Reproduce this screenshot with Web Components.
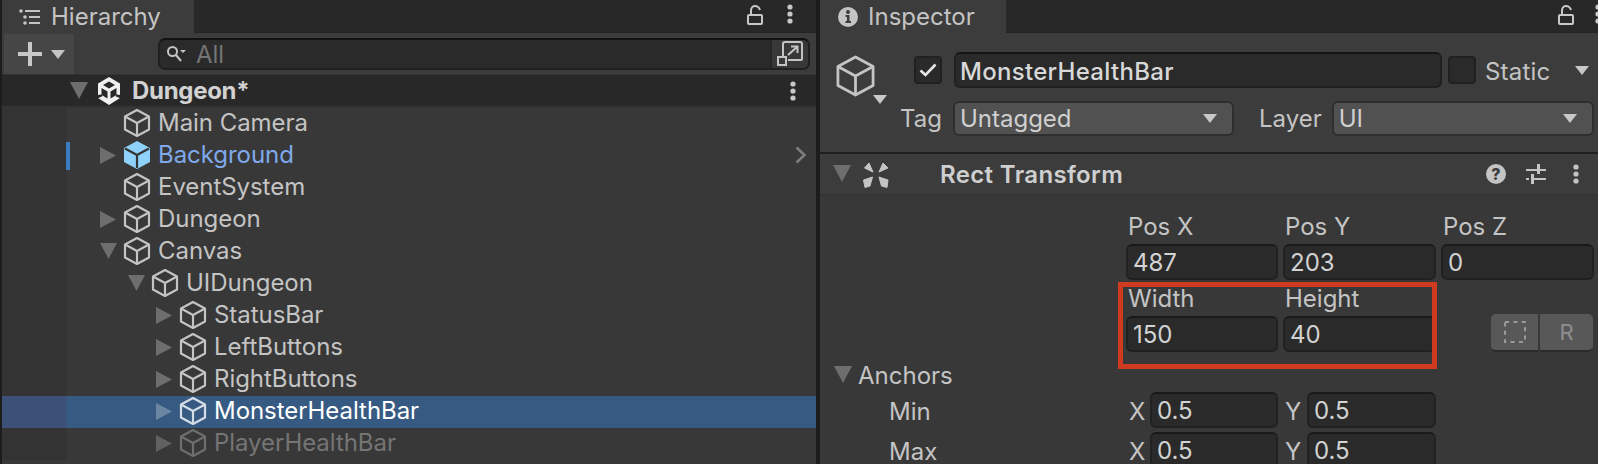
<!DOCTYPE html>
<html>
<head>
<meta charset="utf-8">
<title>Unity Editor</title>
<style>
  html, body { margin: 0; height: 464px; overflow: hidden; background: #1c1c1c; }
  body { font-family: Inter, "Liberation Sans", sans-serif; font-size: 24px; color: #c4c4c4; }
</style>
</head>
<body>
<unity-editor>
  <hierarchy-panel slot="left">
    <tree-row depth="1" icon="cube" arrow="none">Main Camera</tree-row>
    <tree-row depth="1" icon="prefab" arrow="right" tone="prefab" marker chevron>Background</tree-row>
    <tree-row depth="1" icon="cube" arrow="none">EventSystem</tree-row>
    <tree-row depth="1" icon="cube" arrow="right">Dungeon</tree-row>
    <tree-row depth="1" icon="cube" arrow="down">Canvas</tree-row>
    <tree-row depth="2" icon="cube" arrow="down">UIDungeon</tree-row>
    <tree-row depth="3" icon="cube" arrow="right">StatusBar</tree-row>
    <tree-row depth="3" icon="cube" arrow="right">LeftButtons</tree-row>
    <tree-row depth="3" icon="cube" arrow="right">RightButtons</tree-row>
    <tree-row depth="3" icon="cube" arrow="right" selected>MonsterHealthBar</tree-row>
    <tree-row depth="3" icon="cube" arrow="right" tone="off">PlayerHealthBar</tree-row>
  </hierarchy-panel>
  <inspector-panel slot="right"></inspector-panel>
</unity-editor>

<script>
const ICONS = {
  cube: `<svg viewBox="0 0 28 30" width="28" height="30" fill="none" stroke="currentColor" stroke-width="2.2" stroke-linejoin="round"><path d="M14 2 26 8.5V21.5L14 28 2 21.5V8.5Z"/><path d="M2 8.5 14 15 26 8.5M14 15V28"/></svg>`,
  prefab: `<svg viewBox="0 0 28 30" width="28" height="30"><path d="M14 1 27 8V22L14 29 1 22V8Z" fill="#8ed2fb"/><path d="M2 8.5 14 15 26 8.5M14 15V28" fill="none" stroke="#333" stroke-width="2.2"/></svg>`,
  unity: `<svg viewBox="0 0 24 28" width="24" height="28"><path d="M12 0 23 6.5V21L12 28 1 21V6.5Z" fill="#f0f0f0"/><path d="M12 4.5 18 8 12 11.5 6 8ZM4.5 11 10.5 14.5V21.5L4.5 18ZM19.5 11V18L13.5 21.5V14.5Z" fill="#282828"/><path d="M0 18 5 17.5V19.5L0 21.5ZM24 18 19 17.5V19.5L24 21.5Z" fill="#282828"/></svg>`,
  kebab: `<svg viewBox="0 0 6 20" width="6" height="20" fill="currentColor"><circle cx="3" cy="3" r="2.6"/><circle cx="3" cy="10" r="2.6"/><circle cx="3" cy="17" r="2.6"/></svg>`,
  lock: `<svg viewBox="0 0 16 20" width="16" height="20" fill="none" stroke="currentColor" stroke-width="2"><rect x="1" y="10" width="14" height="9" rx="1"/><path d="M4 10V5.5C4 2.5 6 1 8 1S12 2 13 5"/></svg>`,
  list: `<svg viewBox="0 0 22 16" width="22" height="16" fill="currentColor"><circle cx="2" cy="2" r="1.8"/><circle cx="6" cy="8" r="1.8"/><circle cx="6" cy="14" r="1.8"/><rect x="6" y="1" width="15" height="2"/><rect x="10" y="7" width="11" height="2"/><rect x="10" y="13" width="11" height="2"/></svg>`,
  info: `<svg viewBox="0 0 20 20" width="20" height="20"><circle cx="10" cy="10" r="10" fill="#c4c4c4"/><circle cx="10" cy="5" r="2" fill="#3c3c3c"/><path d="M7.5 8H11.5V14H13V16H7.5V14H9V10H7.5Z" fill="#3c3c3c"/></svg>`,
  plus: `<svg viewBox="0 0 24 24" width="24" height="24" fill="#c8c8c8"><rect x="10" y="0" width="4" height="24"/><rect x="0" y="10" width="24" height="4"/></svg>`,
  search: `<svg viewBox="0 0 20 18" width="20" height="18" fill="none" stroke="#c4c4c4" stroke-width="2"><circle cx="6.5" cy="6.5" r="4.5"/><path d="M10 10 15 16"/><path d="M14 5H20L17 8Z" fill="#c4c4c4" stroke="none"/></svg>`,
  scene: `<svg viewBox="0 0 26 26" width="26" height="26" fill="none" stroke="#c4c4c4" stroke-width="2"><path d="M6 15V3Q6 1 8 1H23Q25 1 25 3V18Q25 19 23 19H11"/><rect x="1" y="16" width="8" height="8"/><path d="M11 14 20 6M14 5.5H20.5V12"/></svg>`,
  rect: `<svg viewBox="0 0 40 34" width="40" height="34" fill="#c4c4c4" stroke="#c4c4c4" stroke-width="1" stroke-linejoin="round"><path d="M9.5 11 14 6 18 15ZM24 15 28 6 33 11ZM8.5 23 10 30.5 15 29 17.5 20ZM24 20 26.5 29 32 30.5 33 23Z"/></svg>`,
  sliders: `<svg viewBox="0 0 20 20" width="20" height="20" fill="#c4c4c4"><rect x="0" y="5" width="20" height="2"/><rect x="0" y="14" width="3" height="2"/><rect x="8" y="14" width="12" height="2"/><rect x="11" y="0" width="3" height="10"/><rect x="5" y="10" width="3" height="10"/></svg>`,
  check: `<svg viewBox="0 0 18 14" width="18" height="14" fill="none" stroke="#e8e8e8" stroke-width="2.6"><path d="M1.5 7.5 6.5 12 16.5 1.5"/></svg>`,
  dashed: `<svg viewBox="0 0 22 22" width="22" height="22" fill="none" stroke="#9a9a9a" stroke-width="2" stroke-dasharray="4 4.4"><rect x="1" y="1" width="20" height="20"/></svg>`
};

const tri = (dir, size, color) => {
  const pts = dir === 'down' ? '0,0 16,0 8,15' : dir === 'right' ? '0,0 15,8 0,16' : '';
  return `<svg viewBox="0 0 16 16" width="${size}" height="${size}"><polygon points="${pts}" fill="${color}"/></svg>`;
};

class UnityEditor extends HTMLElement {
  constructor() {
    super();
    this.attachShadow({ mode: 'open' });
    this.shadowRoot.innerHTML = `
      <style>
        :host { display: grid; grid-template-columns: 814px 778px; column-gap: 4px; padding-left: 2px; height: 464px; overflow: hidden; }
      </style>
      <slot name="left"></slot>
      <slot name="right"></slot>
    `;
  }
}

class PanelTabs extends HTMLElement {
  constructor() {
    super();
    this.attachShadow({ mode: 'open' });
    const w = this.getAttribute('tab-width');
    const icon = this.getAttribute('icon');
    this.shadowRoot.innerHTML = `
      <style>
        :host { display: flex; align-items: stretch; height: 33px; background: #282828; color: #c4c4c4; box-shadow: inset 0 -1px 0 #232323; }
        .tab { box-sizing: border-box; width: ${w}px; background: #3c3c3c; display: flex; align-items: center; padding-left: ${this.getAttribute('tab-pad')}px; gap: ${this.getAttribute('tab-gap')}px; }
        .label { line-height: 33px; }
        svg { display: block; flex: none; }
        .tools { margin-left: auto; display: flex; align-items: center; color: #c8c8c8; }
        .lock { margin-bottom: 4px; }
        .keb { margin-left: ${this.getAttribute('keb-gap')}px; margin-right: ${this.getAttribute('keb-right')}px; margin-bottom: 5px; }
      </style>
      <div class="tab">${ICONS[icon]}<span class="label"><slot></slot></span></div>
      <div class="tools"><span class="lock">${ICONS.lock}</span><span class="keb">${ICONS.kebab}</span></div>
    `;
  }
}

class HierarchyPanel extends HTMLElement {
  constructor() {
    super();
    this.attachShadow({ mode: 'open' });
    this.shadowRoot.innerHTML = `
      <style>
        :host { display: block; background: #383838; height: 464px; overflow: hidden; }
        .toolbar { height: 42px; box-sizing: border-box; background: #3c3c3c; display: flex; align-items: flex-start; padding-top: 1px; border-bottom: 1px solid #333; }
        .add { width: 70px; height: 40px; margin-left: 2px; background: #464646; display: flex; align-items: center; padding-left: 14px; box-sizing: border-box; gap: 9px; }
        .add i { width: 0; height: 0; border: 7.5px solid transparent; border-top: 9px solid #c4c4c4; border-bottom: 0; }
        .search { box-sizing: border-box; margin: 4px 0 0 84px; width: 652px; height: 32px; background: #2a2a2a; border: 2px solid #212121; border-top-color: #121212; border-radius: 7px; display: flex; align-items: center; overflow: hidden; }
        .search .glass { margin-left: 6px; display: flex; }
        .search .ph { margin-left: 10px; color: #757575; line-height: 28px; position: relative; top: 1px; }
        .search .btn { margin-left: auto; width: 36px; height: 28px; background: #383838; display: flex; align-items: center; justify-content: center; border-left: 2px solid #262626; }
        .scene { height: 33px; box-sizing: border-box; background: #282828; display: flex; align-items: center; padding-left: 68px; border-bottom: 2px solid #333; }
        .scene .arrow { display: flex; width: 28px; }
        .scene .logo { display: flex; margin-left: -1px; }
        .scene .name { margin-left: 11px; font-weight: 700; letter-spacing: -0.3px; color: #d2d2d2; line-height: 31px; }
        .scene .keb { margin-left: auto; margin-right: 20px; color: #c8c8c8; display: flex; }
        svg { display: block; }
      </style>
      <panel-tabs tab-width="192" icon="list" tab-pad="17" tab-gap="10" keb-gap="24" keb-right="23">Hierarchy</panel-tabs>
      <div class="toolbar">
        <div class="add">${ICONS.plus}<i></i></div>
        <div class="search">
          <span class="glass">${ICONS.search}</span><span class="ph">All</span>
          <span class="btn">${ICONS.scene}</span>
        </div>
      </div>
      <div class="scene">
        <span class="arrow">${tri('down', 18, '#6e6e6e')}</span>
        <span class="logo">${ICONS.unity}</span>
        <span class="name">Dungeon*</span>
        <span class="keb">${ICONS.kebab}</span>
      </div>
      <slot></slot>
    `;
  }
}

class TreeRow extends HTMLElement {
  constructor() {
    super();
    this.attachShadow({ mode: 'open' });
    const depth = Number(this.getAttribute('depth'));
    const arrow = this.getAttribute('arrow');
    const tone = this.getAttribute('tone');
    const selected = this.hasAttribute('selected');
    const arrowColor = selected ? '#6a86a2' : tone === 'off' ? '#616161' : '#6e6e6e';
    const color = selected ? '#ffffff' : tone === 'prefab' ? '#7fa9ea' : tone === 'off' ? '#757575' : '#c4c4c4';
    const iconColor = tone === 'off' ? '#6e6e6e' : selected ? '#d4dde6' : '#c4c4c4';
    this.shadowRoot.innerHTML = `
      <style>
        :host { display: flex; height: 32px; align-items: stretch; color: ${color}; background: ${selected ? '#375a82' : 'transparent'}; }
        .gutter { width: 64px; flex: none; background: ${selected ? '#3d5078' : '#333333'}; }
        .marker { width: 4px; flex: none; margin: 2px 0; background: ${this.hasAttribute('marker') ? '#3a7dc0' : 'transparent'}; }
        .content { flex: 1; display: flex; align-items: center; padding-left: ${28 * depth}px; padding-right: 9px; position: relative; top: -1px; }
        .arrow { width: 25px; flex: none; display: flex; color: ${arrowColor}; padding-left: 2px; box-sizing: border-box; }
        .icon { display: flex; color: ${iconColor}; margin-right: 7px; }
        .label { line-height: 32px; white-space: nowrap; letter-spacing: -0.05px; }
        .chev { margin-left: auto; }
        svg { display: block; }
      </style>
      <div class="gutter"></div><div class="marker"></div>
      <div class="content">
        <span class="arrow">${arrow === 'none' ? '' : tri(arrow, 17, arrowColor)}</span>
        <span class="icon">${ICONS[this.getAttribute('icon')]}</span>
        <span class="label"><slot></slot></span>
        ${this.hasAttribute('chevron') ? `<svg class="chev" viewBox="0 0 12 18" width="12" height="18" fill="none" stroke="#7d7d7d" stroke-width="2.6"><path d="M1.5 1.5 9.5 9 1.5 16.5"/></svg>` : ''}
      </div>
    `;
  }
}

class SelectBox extends HTMLElement {
  constructor() {
    super();
    this.attachShadow({ mode: 'open' });
    this.shadowRoot.innerHTML = `
      <style>
        :host { display: flex; box-sizing: border-box; height: 35px; background: #515151; border: 2px solid #2e2e2e; border-radius: 6px; align-items: center; padding: 0 15px 0 5px; color: #d0d0d0; justify-content: space-between; }
        i { width: 0; height: 0; border: 7.5px solid transparent; border-top: 9px solid #c8c8c8; border-bottom: 0; }
      </style>
      <slot></slot><i></i>
    `;
  }
}

class NumField extends HTMLElement {
  constructor() {
    super();
    this.attachShadow({ mode: 'open' });
    this.shadowRoot.innerHTML = `
      <style>
        :host { display: flex; box-sizing: border-box; height: 36px; background: #2a2a2a; border: 2px solid #212121; border-top-color: #1a1a1a; border-radius: 6px; align-items: center; padding: 2px 0 0 5px; color: #d2d2d2; line-height: 30px; min-width: 0; overflow: hidden; }
      </style>
      <slot></slot>
    `;
  }
}

class InspectorHeader extends HTMLElement {
  constructor() {
    super();
    this.attachShadow({ mode: 'open' });
    this.shadowRoot.innerHTML = `
      <style>
        :host { display: flex; box-sizing: border-box; height: 120px; background: #3c3c3c; border-bottom: 2px solid #1f1f1f; color: #c4c4c4; }
        .obj { width: 74px; flex: none; padding: 20px 0 0 15px; box-sizing: border-box; position: relative; }
        .obj i { position: absolute; left: 53px; top: 61px; width: 0; height: 0; border: 7px solid transparent; border-top: 9px solid #c8c8c8; border-bottom: 0; }
        .rows { flex: 1; display: flex; flex-direction: column; padding-top: 18px; }
        .r1 { display: flex; align-items: center; height: 36px; padding-left: 20px; }
        .r2 { display: flex; align-items: center; height: 35px; margin-top: 13px; padding-left: 6px; }
        .cb { box-sizing: border-box; width: 28px; height: 28px; background: #2a2a2a; border: 2px solid #212121; border-radius: 4px; display: flex; align-items: center; justify-content: center; flex: none; }
        .name { box-sizing: border-box; margin-left: 12px; width: 488px; height: 36px; background: #2a2a2a; border: 2px solid #212121; border-top-color: #141414; border-radius: 6px; font-weight: 500; letter-spacing: 0.3px; color: #d8d8d8; display: flex; align-items: center; padding: 2px 0 0 4px; }
        .static { margin-left: 6px; }
        .slabel { margin-left: 9px; padding-top: 2px; flex: none; letter-spacing: 0.2px; }
        .sarrow { margin-left: 25px; width: 0; height: 0; border: 7.5px solid transparent; border-top: 9px solid #c8c8c8; border-bottom: 0; }
        select-box.tag { margin-left: 11px; width: 281px; }
        select-box.layer { margin-left: 10px; width: 262px; }
        .layerlabel { margin-left: 25px; }
        svg { display: block; }
      </style>
      <div class="obj">
        <svg viewBox="0 0 28 30" width="41" height="44" fill="none" stroke="#c4c4c4" stroke-width="1.9" stroke-linejoin="round"><path d="M14 2 26 8.5V21.5L14 28 2 21.5V8.5Z"/><path d="M2 8.5 14 15 26 8.5M14 15V28"/></svg>
        <i></i>
      </div>
      <div class="rows">
        <div class="r1">
          <span class="cb">${ICONS.check}</span>
          <span class="name">MonsterHealthBar</span>
          <span class="cb static"></span>
          <span class="slabel">Static</span>
          <i class="sarrow"></i>
        </div>
        <div class="r2">
          <span>Tag</span><select-box class="tag">Untagged</select-box>
          <span class="layerlabel">Layer</span><select-box class="layer">UI</select-box>
        </div>
      </div>
    `;
  }
}

class ComponentHeader extends HTMLElement {
  constructor() {
    super();
    this.attachShadow({ mode: 'open' });
    this.shadowRoot.innerHTML = `
      <style>
        :host { display: flex; box-sizing: border-box; height: 41px; background: #3c3c3c; border-bottom: 1px solid #333; align-items: center; padding-left: 13px; color: #c4c4c4; }
        .arrow { display: flex; width: 22px; }
        .title { margin-left: 45px; font-weight: 600; letter-spacing: 0.35px; color: #cfcfcf; }
        .tools { margin-left: auto; display: flex; align-items: center; }
        .help { width: 20px; height: 20px; border-radius: 50%; background: #c4c4c4; color: #3c3c3c; font-size: 16px; font-weight: 800; line-height: 20px; text-align: center; }
        .sl { margin-left: 20px; }
        .keb { margin-left: 27px; margin-right: 19px; }
        svg { display: block; }
      </style>
      <span class="arrow">${tri('down', 18, '#6e6e6e')}</span>
      ${ICONS.rect}
      <span class="title"><slot></slot></span>
      <span class="tools"><span class="help">?</span><span class="sl">${ICONS.sliders}</span><span class="keb">${ICONS.kebab}</span></span>
    `;
  }
}

class AnchorRow extends HTMLElement {
  constructor() {
    super();
    this.attachShadow({ mode: 'open' });
    this.shadowRoot.innerHTML = `
      <style>
        :host { display: grid; grid-template-columns: 240px 21px 128px 29px 129px; align-items: center; height: 36px; margin-bottom: 4px; padding-left: 69px; color: #c4c4c4; }
        .y { padding-left: 7px; }
        .lbl { padding-top: 2px; }
      </style>
      <span class="lbl">${this.getAttribute('label')}</span>
      <span class="lbl">X</span><num-field>0.5</num-field>
      <span class="y lbl">Y</span><num-field>0.5</num-field>
    `;
  }
}

class InspectorPanel extends HTMLElement {
  constructor() {
    super();
    this.attachShadow({ mode: 'open' });
    this.shadowRoot.innerHTML = `
      <style>
        :host { display: block; position: relative; background: #383838; height: 464px; overflow: hidden; color: #c4c4c4; }
        .grid { display: grid; grid-template-columns: 152px 153px 153px; column-gap: 5px; padding: 17px 0 0 306px; }
        .lab { height: 32px; line-height: 30px; padding-left: 2px; }
        .lab.h { height: 36px; line-height: 38px; }
        .btns { display: flex; justify-content: flex-end; align-items: center; grid-column: 3; grid-row: 4; height: 38px; margin-top: -2px; padding-right: 1px; }
        .btn { box-sizing: border-box; height: 38px; background: #585858; border-bottom: 2px solid #2b2b2b; display: flex; align-items: center; justify-content: center; color: #8f8f8f; font-size: 22px; }
        .b1 { width: 47px; border-radius: 5px 0 0 5px; }
        .b2 { width: 53px; margin-left: 2px; border-radius: 0 5px 5px 0; }
        .anchors { display: flex; align-items: center; height: 32px; margin: 7px 0 1px; padding-left: 14px; gap: 6px; }
        .anchors svg { display: block; }
        .ring { position: absolute; left: 298px; top: 282px; width: 319px; height: 87px; box-sizing: border-box; border: 5px solid #cf3a20; pointer-events: none; }
      </style>
      <panel-tabs tab-width="186" icon="info" tab-pad="18" tab-gap="10" keb-gap="21" keb-right="-3">Inspector</panel-tabs>
      <div style="height:1px;background:#3c3c3c"></div>
      <inspector-header></inspector-header>
      <component-header>Rect Transform</component-header>
      <div class="grid">
        <span class="lab">Pos X</span><span class="lab">Pos Y</span><span class="lab">Pos Z</span>
        <num-field>487</num-field><num-field>203</num-field><num-field>0</num-field>
        <span class="lab h">Width</span><span class="lab h">Height</span>
        <num-field style="grid-row:4;grid-column:1">150</num-field><num-field style="grid-row:4;grid-column:2">40</num-field>
        <div class="btns"><span class="btn b1">${ICONS.dashed}</span><span class="btn b2">R</span></div>
      </div>
      <div class="anchors">${tri('down', 18, '#6e6e6e')}<span>Anchors</span></div>
      <anchor-row label="Min"></anchor-row>
      <anchor-row label="Max"></anchor-row>
      <div class="ring"></div>
    `;
  }
}

customElements.define('panel-tabs', PanelTabs);
customElements.define('tree-row', TreeRow);
customElements.define('select-box', SelectBox);
customElements.define('num-field', NumField);
customElements.define('inspector-header', InspectorHeader);
customElements.define('component-header', ComponentHeader);
customElements.define('anchor-row', AnchorRow);
customElements.define('hierarchy-panel', HierarchyPanel);
customElements.define('inspector-panel', InspectorPanel);
customElements.define('unity-editor', UnityEditor);
</script>
</body>
</html>
